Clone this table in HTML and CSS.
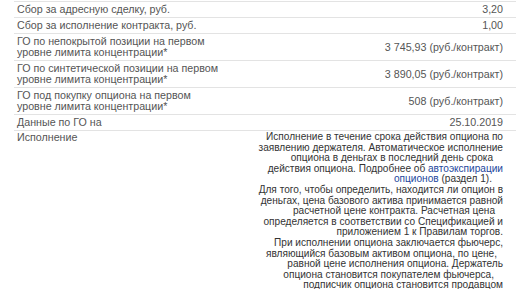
FILE: index.html
```html
<!DOCTYPE html>
<html lang="ru">
<head>
<meta charset="utf-8">
<link rel="stylesheet" href="styles.css">
</head>
<body>
<div class="wrap">
<table class="spec">
<colgroup><col class="c-lbl"><col class="c-val"></colgroup>
<tr><td class="lbl">Сбор за адресную сделку, руб.</td><td class="val">3,20</td></tr>
<tr><td class="lbl">Сбор за исполнение контракта, руб.</td><td class="val">1,00</td></tr>
<tr><td class="lbl">ГО по непокрытой позиции на первом уровне лимита концентрации*</td><td class="val">3 745,93 (руб./контракт)</td></tr>
<tr><td class="lbl">ГО по синтетической позиции на первом уровне лимита концентрации*</td><td class="val">3 890,05 (руб./контракт)</td></tr>
<tr><td class="lbl">ГО под покупку опциона на первом уровне лимита концентрации*</td><td class="val">508 (руб./контракт)</td></tr>
<tr><td class="lbl">Данные по ГО на</td><td class="val">25.10.2019</td></tr>
<tr><td class="lbl top">Исполнение</td><td class="val text">
<span class="ln">Исполнение в течение срока действия опциона по</span>
<span class="ln">заявлению держателя. Автоматическое исполнение</span>
<span class="ln s10">опциона в деньгах в последний день срока</span>
<span class="ln">действия опциона. Подробнее об <a href="#">автоэкспирации</a></span>
<span class="ln s11"><a href="#">опционов</a> (раздел 1).</span>
<span class="ln">Для того, чтобы определить, находится ли опцион в</span>
<span class="ln">деньгах, цена базового актива принимается равной</span>
<span class="ln s8">расчетной цене контракта. Расчетная цена</span>
<span class="ln">определяется в соответствии со Спецификацией и</span>
<span class="ln">приложением 1 к Правилам торгов.</span>
<span class="ln">При исполнении опциона заключается фьючерс,</span>
<span class="ln s6">являющийся базовым активом опциона, по цене,</span>
<span class="ln">равной цене исполнения опциона. Держатель</span>
<span class="ln s9">опциона становится покупателем фьючерса,</span>
<span class="ln">подписчик опциона становится продавцом</span>
</td></tr>
</table>
</div>
</body>
</html>
```
FILE: styles.css
```css
html, body {
  margin: 0;
  padding: 0;
  background: #fff;
  overflow: hidden;
}
.wrap {
  padding: 1px 0 0 14px;
}
.spec {
  width: 502px;
  table-layout: fixed;
  border-collapse: collapse;
  font-family: "Liberation Sans", Arial, sans-serif;
  font-size: 10.7px;
  line-height: 11px;
  color: #555;
}
.c-lbl {
  width: 226px;
}
.spec td {
  border-top: 1px solid #e3e3e3;
  padding: 2px 0 2px 0;
  vertical-align: middle;
}
.lbl {
  padding-left: 3px !important;
  padding-right: 21px !important;
}
.lbl.top {
  vertical-align: top;
  padding-top: 1px !important;
}
.val {
  text-align: right;
  padding-right: 13px !important;
}
.text {
  color: #333;
  font-size: 10.1px;
  line-height: 10.6px;
  padding-top: 1px !important;
}
.ln {
  display: block;
  white-space: nowrap;
}
.s6 { padding-right: 6px; }
.s8 { padding-right: 8px; }
.s9 { padding-right: 9px; }
.s10 { padding-right: 10px; }
.s11 { padding-right: 11px; }
.text a {
  color: #23479c;
  text-decoration: none;
}
```
